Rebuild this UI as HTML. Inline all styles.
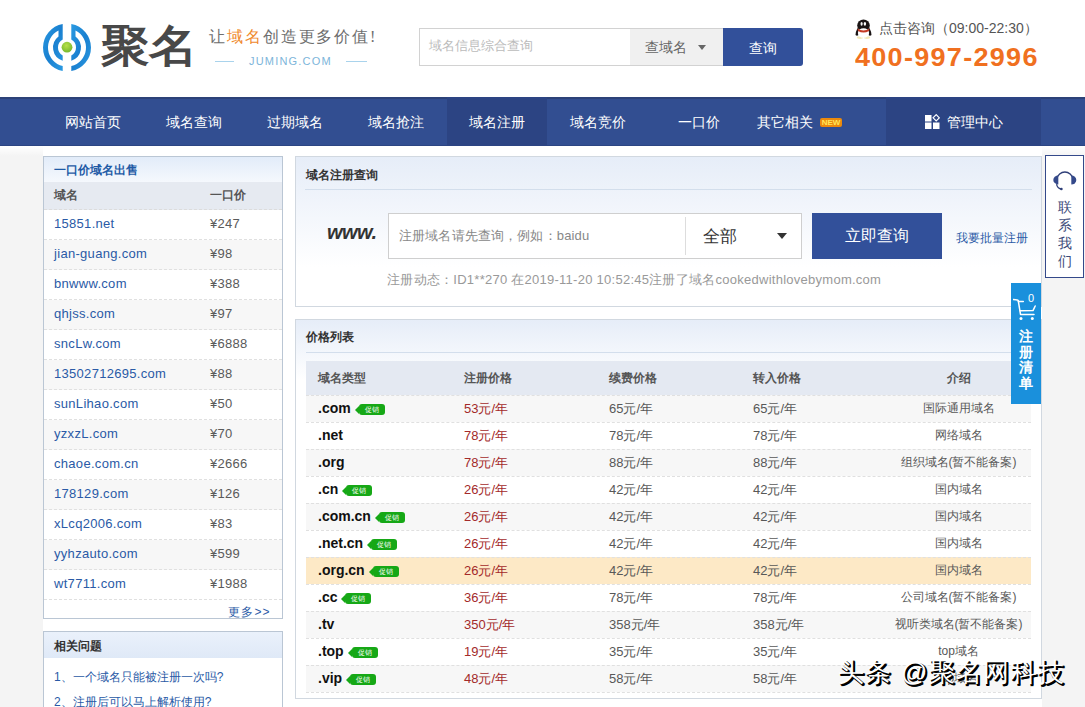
<!DOCTYPE html>
<html><head><meta charset="utf-8">
<style>
*{margin:0;padding:0;box-sizing:border-box}
html,body{width:1085px;height:707px;overflow:hidden}
body{position:relative;background:#f4f4f4;font-family:"Liberation Sans",sans-serif;color:#333;font-size:12px}
.a{position:absolute}
#hdr{left:0;top:0;width:1085px;height:97px;background:#fff}
#nav{left:0;top:97px;width:1085px;height:49px;background:#324e91}
.ni{position:absolute;top:1px;height:49px;line-height:49px;color:#fff;font-size:14px;text-align:center;width:101px}
.box{position:absolute;border:1px solid #c9d8ea;background:linear-gradient(#e6edf8,#fff 120px)}
.srow{position:absolute;left:0;width:238px;height:30px;border-bottom:1px dashed #e0e0e0}
.sd{position:absolute;left:10px;top:6px;font-size:13px;color:#2a5aa6;letter-spacing:0.3px}
.sp{position:absolute;left:166px;top:6px;font-size:13px;color:#5a5a5a;letter-spacing:0.3px}
.th{position:absolute;top:50px;font-size:12px;font-weight:bold;color:#555}
.prow{position:absolute;left:10px;width:725px;height:27px;border-top:1px dashed #e0e0e0;font-size:13px;color:#585858}
.prow span{position:absolute;top:4px;white-space:nowrap}
.pn{left:12px;font-weight:bold;color:#111;font-size:14px}
.pr{left:158px;color:#a32a2a}
.pc3{left:303px}.pc4{left:447px}
.pi{left:580px;width:145px;text-align:center;font-size:12px}
.bd{display:inline-block;position:relative;margin-left:8px;width:26px;height:11px;background:#16a816;border-radius:3px;color:#fff;font-size:7px;line-height:11px;text-align:center;vertical-align:2px;font-weight:normal}
.bd:before{content:"";position:absolute;left:-4px;top:1.5px;border-right:4px solid #16a816;border-top:4px solid transparent;border-bottom:4px solid transparent}
</style></head><body>
<div id="hdr" class="a">
  <!-- logo icon -->
  <svg class="a" style="left:40px;top:20px" width="54" height="55" viewBox="0 0 54 55">
    <defs><linearGradient id="lg" x1="0" y1="0" x2="1" y2="1"><stop offset="0" stop-color="#2a9ae2"/><stop offset="0.5" stop-color="#1a80d0"/><stop offset="1" stop-color="#2a9ae2"/></linearGradient>
    <radialGradient id="gd" cx="0.45" cy="0.35" r="0.7"><stop offset="0" stop-color="#b8e04a"/><stop offset="1" stop-color="#72b52a"/></radialGradient></defs>
    <path d="M22.70 3.89 A24 24 0 0 0 22.70 51.11 L22.70 46.01 A19 19 0 0 1 18.50 10.51 L18.50 16.38 A14 14 0 0 0 22.70 40.82 L22.70 35.41 A9 9 0 0 1 22.70 19.59 Z" fill="url(#lg)"/>
    <path d="M31.30 3.89 A24 24 0 0 1 31.30 51.11 L31.30 46.01 A19 19 0 0 0 35.50 10.51 L35.50 16.38 A14 14 0 0 1 31.30 40.82 L31.30 35.41 A9 9 0 0 0 31.30 19.59 Z" fill="url(#lg)"/>
    <circle cx="27" cy="27.2" r="5.4" fill="url(#gd)"/>
  </svg>
  <div class="a" style="left:101px;top:17px;font-size:44px;color:#484848;font-weight:bold;transform:scaleX(1.1);transform-origin:0 0;line-height:normal">聚名</div>
  <div class="a" style="left:209px;top:27px;font-size:16px;color:#6e6e6e;font-family:'Liberation Serif',serif;letter-spacing:1.9px">让<span style="color:#f0892d">域名</span>创造更多价值!</div>
  <div class="a" style="left:215px;top:61px;width:19px;height:1px;background:#a9d3ec"></div>
  <div class="a" style="left:346px;top:61px;width:21px;height:1px;background:#a9d3ec"></div>
  <div class="a" style="left:249px;top:55px;font-size:11px;color:#7db5da;letter-spacing:1.2px">JUMING.COM</div>
  <!-- search -->
  <div class="a" style="left:419px;top:28px;width:304px;height:38px;border:1px solid #d2d2d2;border-right:none;background:#fff"></div>
  <div class="a" style="left:429px;top:37px;font-size:13px;color:#bbb">域名信息综合查询</div>
  <div class="a" style="left:630px;top:29px;width:93px;height:36px;background:#f0f0f0"></div>
  <div class="a" style="left:645px;top:39px;font-size:14px;color:#666">查域名</div>
  <div class="a" style="left:698px;top:45px;width:0;height:0;border-left:4.5px solid transparent;border-right:4.5px solid transparent;border-top:5px solid #666"></div>
  <div class="a" style="left:723px;top:28px;width:80px;height:38px;background:#32509a;border-radius:0 3px 3px 0;color:#fff;font-size:14px;text-align:center;line-height:40px">查询</div>
  <!-- qq -->
  <svg class="a" style="left:855px;top:19px" width="18" height="20" viewBox="0 0 18 20">
    <ellipse cx="5" cy="18.6" rx="3.2" ry="1.3" fill="#f3e9b8"/>
    <ellipse cx="12" cy="18.6" rx="3.2" ry="1.3" fill="#f3e9b8"/>
    <ellipse cx="8.5" cy="6.5" rx="6.3" ry="6" fill="#1a1414"/>
    <path d="M2.5 9 Q0.5 13 0.5 16 Q2 17.5 3.5 16 L4 11Z M14.5 9 Q16.5 13 16.5 16 Q15 17.5 13.5 16 L13 11Z" fill="#1a1414"/>
    <ellipse cx="8.5" cy="14" rx="5.6" ry="4.8" fill="#fff"/>
    <path d="M2.5 9.5 Q8.5 13.5 14.5 9.5 L14 12 Q8.5 15 3 12Z" fill="#c43a24"/>
    <ellipse cx="6.6" cy="4.8" rx="1.1" ry="1.9" fill="#f4f4f4"/>
    <ellipse cx="9.9" cy="4.8" rx="1.2" ry="1.9" fill="#fff"/>
  </svg>
  <div class="a" style="left:879px;top:20px;font-size:14px;color:#555">点击咨询（09:00-22:30）</div>
  <div class="a" style="left:855px;top:43px;font-size:25px;font-weight:bold;color:#f07020;transform:scaleX(1.08);transform-origin:0 0;white-space:nowrap;letter-spacing:1.2px">400-997-2996</div>
</div>

<div id="nav" class="a">
  <div class="a" style="left:0;top:0;width:1085px;height:2px;background:#2c4278"></div><div class="a" style="left:0;top:48px;width:1085px;height:1px;background:#2c4583"></div>
  <div class="a" style="left:447px;top:0;width:100px;height:49px;background:#2c4483"></div>
  <div class="a" style="left:886px;top:0;width:155px;height:49px;background:#2c4483"></div>
  <div class="ni" style="left:42px">网站首页</div>
  <div class="ni" style="left:143px">域名查询</div>
  <div class="ni" style="left:244px">过期域名</div>
  <div class="ni" style="left:345px">域名抢注</div>
  <div class="ni" style="left:446px">域名注册</div>
  <div class="ni" style="left:547px">域名竞价</div>
  <div class="ni" style="left:648px">一口价</div>
  <div class="ni" style="left:749px;text-align:left;padding-left:8px">其它相关</div>
  <div class="a" style="left:820px;top:21px;width:22px;height:9px;background:#ec8a0c;border-radius:2px;color:#ffe65a;font-size:8px;line-height:9px;text-align:center;font-weight:bold">NEW</div>
  <svg class="a" style="left:925px;top:114px;top:17px" width="15" height="15" viewBox="0 0 15 15">
    <rect x="0" y="1" width="6.5" height="6.5" fill="#fff"/>
    <rect x="0" y="8.5" width="6.5" height="6.5" fill="#fff"/>
    <rect x="8" y="8.5" width="6.5" height="6.5" fill="#fff"/>
    <path d="M11.2 0.7 L14.3 3.8 L11.2 6.9 L8.1 3.8Z" fill="none" stroke="#fff" stroke-width="1.2"/>
  </svg>
  <div class="ni" style="left:947px;width:60px;text-align:left">管理中心</div>
</div>

<!-- SIDEBAR -->
<div class="a" style="left:0;top:146px;width:1085px;height:10px;background:linear-gradient(#fff,#f4f4f4)"></div>
<div class="a" style="left:43px;top:146px;width:999px;height:561px;background:#fff"></div>
<div class="box" style="left:43px;top:156px;width:240px;height:463px;border-color:#bac6d4;background:#fff">
  <div class="a" style="left:0;top:0;width:238px;height:25px;background:linear-gradient(#e2ecf9,#f5f8fd)"></div>
  <div class="a" style="left:10px;top:5px;font-size:12px;font-weight:bold;color:#1f5ba6">一口价域名出售</div>
  <div class="a" style="left:0;top:25px;width:238px;height:28px;background:#e6eaf1;border-bottom:1px dashed #dcdcdc"></div>
  <div class="a" style="left:10px;top:30px;font-size:12px;color:#555;font-weight:bold">域名</div>
  <div class="a" style="left:166px;top:30px;font-size:12px;color:#555;font-weight:bold">一口价</div>
  <div class="srow" style="top:53px;background:#fff"><span class="sd">15851.net</span><span class="sp">¥247</span></div>
<div class="srow" style="top:83px;background:#f7f7f7"><span class="sd">jian-guang.com</span><span class="sp">¥98</span></div>
<div class="srow" style="top:113px;background:#fff"><span class="sd">bnwww.com</span><span class="sp">¥388</span></div>
<div class="srow" style="top:143px;background:#f7f7f7"><span class="sd">qhjss.com</span><span class="sp">¥97</span></div>
<div class="srow" style="top:173px;background:#fff"><span class="sd">sncLw.com</span><span class="sp">¥6888</span></div>
<div class="srow" style="top:203px;background:#f7f7f7"><span class="sd">13502712695.com</span><span class="sp">¥88</span></div>
<div class="srow" style="top:233px;background:#fff"><span class="sd">sunLihao.com</span><span class="sp">¥50</span></div>
<div class="srow" style="top:263px;background:#f7f7f7"><span class="sd">yzxzL.com</span><span class="sp">¥70</span></div>
<div class="srow" style="top:293px;background:#fff"><span class="sd">chaoe.com.cn</span><span class="sp">¥2666</span></div>
<div class="srow" style="top:323px;background:#f7f7f7"><span class="sd">178129.com</span><span class="sp">¥126</span></div>
<div class="srow" style="top:353px;background:#fff"><span class="sd">xLcq2006.com</span><span class="sp">¥83</span></div>
<div class="srow" style="top:383px;background:#f7f7f7"><span class="sd">yyhzauto.com</span><span class="sp">¥599</span></div>
<div class="srow" style="top:413px;background:#fff"><span class="sd">wt7711.com</span><span class="sp">¥1988</span></div>

  <div class="a" style="left:184px;top:447px;font-size:12px;color:#2a5aa6;letter-spacing:1.2px">更多&gt;&gt;</div>
</div>
<div class="box" style="left:43px;top:631px;width:240px;height:90px;border-color:#bac6d4;background:#fff">
  <div class="a" style="left:0;top:0;width:238px;height:26px;background:linear-gradient(#eaf1fb,#dfe9f7)"></div>
  <div class="a" style="left:10px;top:6px;font-size:12px;font-weight:bold;color:#333">相关问题</div>
  <div class="a" style="left:10px;top:37px;font-size:12px;color:#2a5aa6">1、一个域名只能被注册一次吗?</div>
  <div class="a" style="left:10px;top:62px;font-size:12px;color:#2a5aa6">2、注册后可以马上解析使用?</div>
</div>

<!-- PANEL 1 -->
<div class="box" style="left:295px;top:156px;width:747px;height:151px;border-color:#d1d8e0;background:linear-gradient(#e6edf8,#fff 110px)">
  <div class="a" style="left:10px;top:10px;font-size:12px;font-weight:bold;color:#333">域名注册查询</div>
  <div class="a" style="left:9px;top:32px;width:727px;height:1px;background:#d3deec"></div>
  <div class="a" style="left:31px;top:64px;font-size:20px;font-weight:bold;font-style:italic;color:#333;letter-spacing:-0.5px">www.</div>
  <div class="a" style="left:92px;top:56px;width:414px;height:46px;border:1px solid #cfcfcf;background:#fff"></div>
  <div class="a" style="left:103px;top:70px;font-size:13px;color:#888;letter-spacing:0.15px">注册域名请先查询，例如：baidu</div>
  <div class="a" style="left:389px;top:60px;width:1px;height:38px;background:#ddd"></div>
  <div class="a" style="left:407px;top:68px;font-size:17px;color:#333">全部</div>
  <div class="a" style="left:481px;top:76px;width:0;height:0;border-left:5px solid transparent;border-right:5px solid transparent;border-top:6px solid #333"></div>
  <div class="a" style="left:516px;top:56px;width:130px;height:46px;background:#32509a;color:#fff;font-size:16px;text-align:center;line-height:46px">立即查询</div>
  <div class="a" style="left:660px;top:73px;font-size:12px;color:#2a5aa6">我要批量注册</div>
  <div class="a" style="left:91px;top:114px;font-size:13px;color:#999;letter-spacing:0.26px">注册动态：ID1**270 在2019-11-20 10:52:45注册了域名cookedwithlovebymom.com</div>
</div>

<!-- PANEL 2 -->
<div class="box" style="left:295px;top:319px;width:747px;height:380px;border-color:#d1d8e0;background:linear-gradient(#e6edf8,#fff 60px)">
  <div class="a" style="left:10px;top:9px;font-size:12px;font-weight:bold;color:#333">价格列表</div>
  <div class="a" style="left:10px;top:32px;width:725px;height:1px;background:#d3deec"></div>
  <div class="a" style="left:10px;top:41px;width:725px;height:34px;background:#e4e9f2"></div>
  <div class="th" style="left:22px">域名类型</div><div class="th" style="left:168px">注册价格</div><div class="th" style="left:313px">续费价格</div><div class="th" style="left:457px">转入价格</div><div class="th" style="left:590px;width:145px;text-align:center">介绍</div>
<div class="prow" style="top:75px;background:#f7f7f7"><span class="pn">.com<span class="bd">促销</span></span><span class="pr">53元/年</span><span class="pc3">65元/年</span><span class="pc4">65元/年</span><span class="pi">国际通用域名</span></div>
<div class="prow" style="top:102px;background:#fff"><span class="pn">.net</span><span class="pr">78元/年</span><span class="pc3">78元/年</span><span class="pc4">78元/年</span><span class="pi">网络域名</span></div>
<div class="prow" style="top:129px;background:#f7f7f7"><span class="pn">.org</span><span class="pr">78元/年</span><span class="pc3">88元/年</span><span class="pc4">88元/年</span><span class="pi">组织域名(暂不能备案)</span></div>
<div class="prow" style="top:156px;background:#fff"><span class="pn">.cn<span class="bd">促销</span></span><span class="pr">26元/年</span><span class="pc3">42元/年</span><span class="pc4">42元/年</span><span class="pi">国内域名</span></div>
<div class="prow" style="top:183px;background:#f7f7f7"><span class="pn">.com.cn<span class="bd">促销</span></span><span class="pr">26元/年</span><span class="pc3">42元/年</span><span class="pc4">42元/年</span><span class="pi">国内域名</span></div>
<div class="prow" style="top:210px;background:#fff"><span class="pn">.net.cn<span class="bd">促销</span></span><span class="pr">26元/年</span><span class="pc3">42元/年</span><span class="pc4">42元/年</span><span class="pi">国内域名</span></div>
<div class="prow" style="top:237px;background:#fde9c6"><span class="pn">.org.cn<span class="bd">促销</span></span><span class="pr">26元/年</span><span class="pc3">42元/年</span><span class="pc4">42元/年</span><span class="pi">国内域名</span></div>
<div class="prow" style="top:264px;background:#fff"><span class="pn">.cc<span class="bd">促销</span></span><span class="pr">36元/年</span><span class="pc3">78元/年</span><span class="pc4">78元/年</span><span class="pi">公司域名(暂不能备案)</span></div>
<div class="prow" style="top:291px;background:#f7f7f7"><span class="pn">.tv</span><span class="pr">350元/年</span><span class="pc3">358元/年</span><span class="pc4">358元/年</span><span class="pi">视听类域名(暂不能备案)</span></div>
<div class="prow" style="top:318px;background:#fff"><span class="pn">.top<span class="bd">促销</span></span><span class="pr">19元/年</span><span class="pc3">35元/年</span><span class="pc4">35元/年</span><span class="pi">top域名</span></div>
<div class="prow" style="top:345px;background:#f7f7f7"><span class="pn">.vip<span class="bd">促销</span></span><span class="pr">48元/年</span><span class="pc3">58元/年</span><span class="pc4">58元/年</span><span class="pi">vip域名</span></div>
<div class="a" style="left:10px;top:372px;width:725px;height:1px;border-top:1px dashed #e0e0e0"></div>

</div>

<!-- FLOATS -->
<div class="a" style="left:1045px;top:155px;width:39px;height:123px;border:1px solid #34498a;background:#fff">
  <svg class="a" style="left:6px;top:12px" width="26" height="24" viewBox="0 0 26 24">
    <path d="M4.9 10.8 A8.1 8.1 0 0 1 20.9 10.8" fill="none" stroke="#2f3f78" stroke-width="1.4"/>
    <path d="M6.3 7.4 L6.3 16.4 A5 4.5 0 0 1 6.3 7.4 Z" fill="#34498a"/>
    <path d="M19.3 7.4 L19.3 16.6 A5 4.6 0 0 0 19.3 7.4 Z" fill="#34498a"/>
    <path d="M4.6 16.2 Q5.2 20.3 9 21" fill="none" stroke="#2f3f78" stroke-width="1.3"/>
    <circle cx="9.4" cy="21" r="1.3" fill="#2f3f78"/>
  </svg>
  <div class="a" style="left:12px;top:42px;width:14px;font-size:14px;line-height:18px;color:#3a4a78">联系我们</div>
</div>
<div class="a" style="left:1011px;top:283px;width:30px;height:121px;background:#1a90dc">
  <svg class="a" style="left:2px;top:10px" width="26" height="28" viewBox="0 0 26 28">
    <path d="M0.2 6.5 Q3.5 6.6 5.2 7.4 L7.5 21.4 L21 21.4" fill="none" stroke="#fff" stroke-width="1.5" stroke-linecap="round" stroke-linejoin="round"/>
    <path d="M5.4 8.5 L10.3 8.5" fill="none" stroke="#fff" stroke-width="1.5" stroke-linecap="round"/>
    <path d="M22.2 13 L20 17.6 L7.1 17.8" fill="none" stroke="#fff" stroke-width="1.5" stroke-linecap="round" stroke-linejoin="round"/>
    <circle cx="8" cy="25.4" r="1.5" fill="#fff"/>
    <circle cx="19.3" cy="25.4" r="1.5" fill="#fff"/>
  </svg>
  <div class="a" style="left:17px;top:9px;font-size:11px;color:#fff">0</div>
  <div class="a" style="left:8px;top:46px;width:14px;font-size:14px;line-height:15.6px;color:#fff;font-weight:bold">注册清单</div>
</div>

<!-- WATERMARK -->
<div class="a" style="left:838px;top:655px;font-size:26px;color:#fff;text-shadow:1px 1px 0 #000,2px 2px 0 #000,1px 2px 0 #000,2px 1px 0 #111;white-space:nowrap;letter-spacing:1.3px">头条 @聚名网科技</div>
</body></html>
